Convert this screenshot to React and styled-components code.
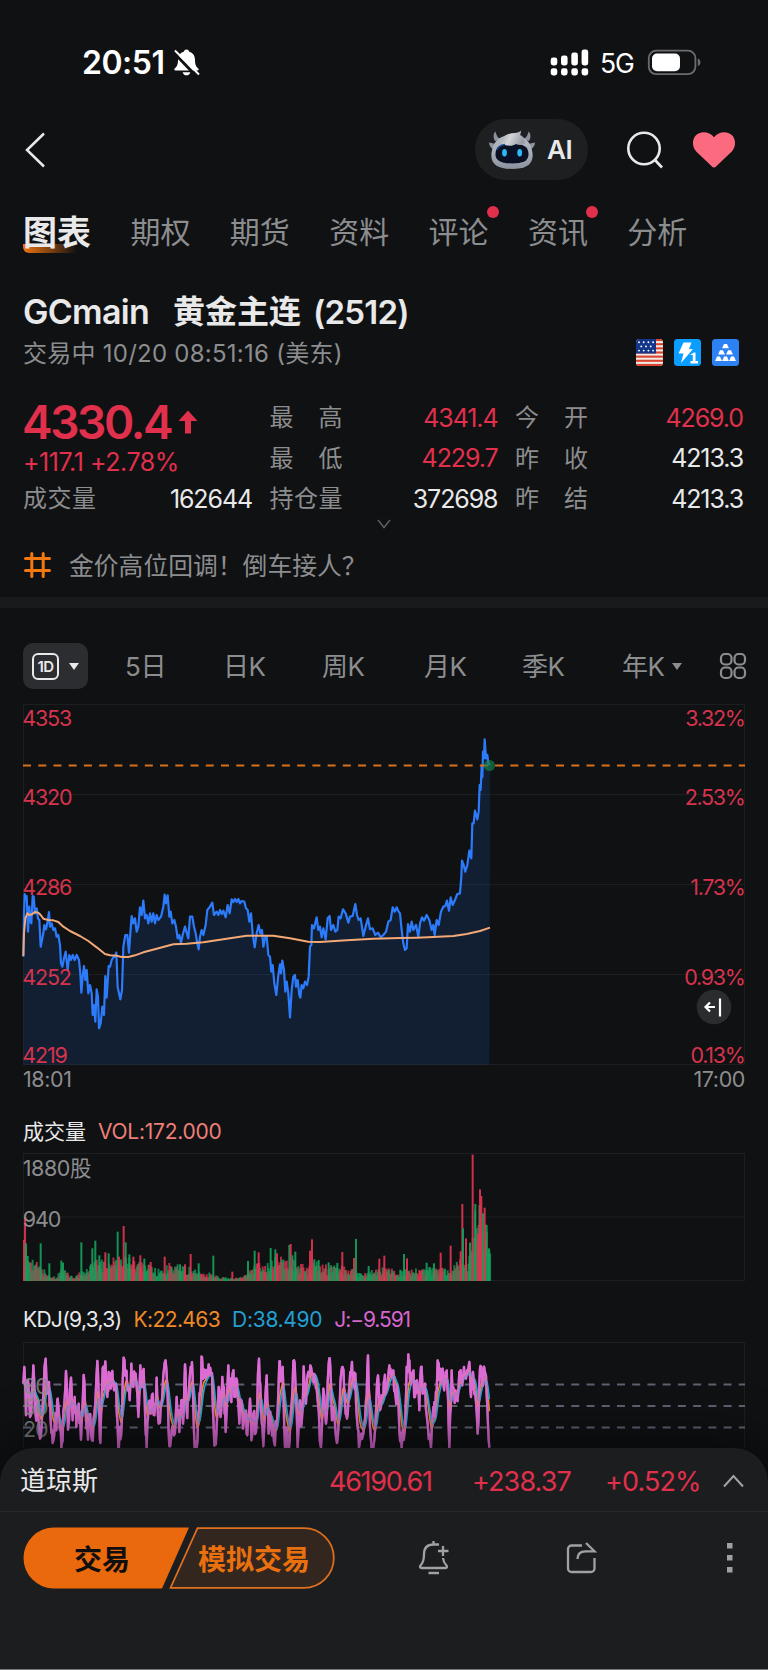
import styled, { createGlobalStyle, css } from "styled-components";

const RED = "#e0304c";
const AXIS_RED = "#d6334d";
const GREY = "#8c8d8f";
const WHITE = "#e9e9ea";

const tabs = [
  { label: "图表", active: true },
  { label: "期权" },
  { label: "期货" },
  { label: "资料" },
  { label: "评论", dot: true },
  { label: "资讯", dot: true },
  { label: "分析" },
];

const quotes = [
  { label: ["最", "高"], value: "4341.4", up: true },
  { label: ["今", "开"], value: "4269.0", up: true },
  { label: ["最", "低"], value: "4229.7", up: true },
  { label: ["昨", "收"], value: "4213.3" },
  { label: ["持", "仓", "量"], value: "372698" },
  { label: ["昨", "结"], value: "4213.3" },
];

// series are kept in the plot's own units, three per pixel
const priceLine =
  "70,770 72,640 74,582 78,600 80,588 82,640 84,695 88,620 90,660 94,670 98,588 101,590 105,640 110,625 114,655 118,660 122,740 126,720 130,700 133,675 138,688 142,670 147,636 150,680 155,670 160,690 165,685 170,710 175,705 180,735 183,790 187,800 192,775 197,755 203,810 208,765 213,780 218,765 224,780 230,765 237,780 241,820 244,878 248,830 252,798 256,840 260,810 265,880 270,855 275,880 278,945 282,915 286,965 290,868 294,890 297,985 302,970 307,920 312,945 316,828 320,893 326,798 330,800 335,780 340,772 345,770 349,758 353,860 358,885 361,898 366,870 370,740 376,705 382,705 387,758 391,700 395,648 400,670 405,655 410,695 415,680 420,622 425,645 430,602 435,655 440,645 445,670 450,640 455,665 460,640 465,670 470,645 475,660 483,650 490,620 494,584 498,610 503,586 508,650 512,635 517,670 523,660 528,680 533,715 538,705 543,728 548,705 555,680 565,715 570,650 577,650 582,680 587,700 592,730 596,748 600,710 605,690 610,705 617,675 622,630 630,620 637,608 642,645 650,635 655,645 660,630 665,642 670,632 677,652 683,615 689,640 695,598 700,606 705,597 710,606 715,597 720,610 725,603 733,605 738,625 743,630 748,665 753,640 758,700 764,742 770,700 776,675 781,700 786,690 790,740 796,710 800,708 805,765 810,770 814,815 818,795 823,850 829,885 835,825 840,793 843,820 847,782 852,810 856,875 860,845 865,880 870,952 875,870 880,830 885,825 888,860 893,840 898,885 901,893 905,855 910,865 915,845 921,855 926,830 930,740 934,735 936,675 942,685 950,652 955,690 960,680 965,712 970,685 977,718 983,655 989,648 993,690 1000,675 1006,695 1012,690 1016,650 1022,655 1029,628 1037,640 1045,668 1050,650 1058,648 1066,612 1071,645 1076,660 1082,655 1090,708 1097,680 1104,655 1110,688 1118,685 1126,705 1134,698 1142,712 1150,705 1158,695 1165,665 1172,660 1178,622 1184,635 1190,622 1196,635 1200,640 1205,690 1210,730 1215,750 1220,745 1224,672 1230,695 1235,665 1240,690 1248,675 1255,710 1260,670 1266,652 1272,662 1280,645 1288,660 1295,690 1300,675 1304,705 1310,660 1316,675 1323,635 1330,620 1336,618 1341,602 1347,632 1352,592 1358,615 1365,600 1372,582 1380,580 1384,530 1386,482 1391,495 1396,515 1402,495 1408,452 1414,475 1417,370 1421,370 1425,332 1432,358 1436,335 1439,255 1442,270 1445,200 1447,232 1449,155 1452,175 1454,118 1458,175 1462,165 1465,190 1470,195";

const averageLine =
  "70,768 72,700 76,655 82,640 88,645 96,643 104,636 115,638 122,645 130,656 145,660 160,661 175,666 190,680 210,693 240,708 265,723 290,742 315,762 330,766 350,767 365,771 385,771 405,766 430,757 470,746 520,733 560,731 610,727 660,719 740,707 820,707 870,715 925,725 960,726 1040,721 1120,716 1200,714 1250,713 1300,711 1360,708 1400,702 1440,693 1470,683";

const volumeEnvelope = parse(
  "70,110 90,55 110,50 130,30 150,15 165,10 180,35 200,30 215,10 240,25 270,45 300,60 330,65 360,70 390,65 410,50 450,40 490,25 500,50 540,40 570,35 600,25 640,20 660,10 690,8 720,10 745,25 770,50 800,45 830,65 860,60 890,50 920,40 950,50 980,40 1020,40 1060,30 1080,20 1120,35 1160,35 1200,30 1230,35 1300,35 1350,35 1380,60 1400,60 1415,150 1425,190 1440,200 1460,120 1470,60"
);

const volumeSpikes =
  "72,390r 75,322r 78,400g 83,438g 122,400g 148,460g 184,452g 189,458g 244,397g 277,415g 286,392g 298,436g 316,427r 326,430g 353,365g 357,440r 371,348r 377,397g 388,433g 400,440r 421,436r 433,446g 452,456r 494,440r 540,463g 555,463r 572,432r 596,460g 640,437g 697,485r 744,453g 764,422g 776,427r 812,414g 826,418g 831,430r 868,405g 872,402r 877,436g 886,425g 930,422r 936,388r 943,448g 956,450g 986,457g 1012,459g 1027,426r 1062,444r 1068,387g 1106,468g 1138,446r 1153,437r 1212,432g 1221,445r 1280,458g 1302,460g 1322,428r 1352,407r 1382,424r 1387,282r 1389,355g 1398,385r 1410,398g 1418,134r 1426,282g 1434,370r 1440,238r 1444,258r 1449,310g 1454,293r 1460,345g 1467,415g"
    .split(" ")
    .map((s) => {
      const [x, y] = s.slice(0, -1).split(",").map(Number);
      return { x, h: 513 - y, up: s.endsWith("r") };
    });

const jKeys = parse(
  "70,250 73,200 78,345 84,240 90,350 95,300 100,195 107,345 112,300 120,415 127,330 137,175 142,280 147,245 152,360 158,428 165,350 169,390 173,295 180,390 186,428 192,320 198,212 204,388 213,232 218,360 224,290 229,380 236,310 243,418 251,224 257,340 264,418 268,345 276,420 283,340 292,182 297,330 301,428 308,205 312,260 316,183 322,290 326,215 332,265 337,212 342,270 348,250 355,442 360,380 363,410 371,172 378,210 383,270 389,300 394,190 400,260 407,220 415,350 421,195 426,260 431,206 436,370 440,442 446,310 452,340 458,280 463,345 470,232 476,370 482,320 494,188 502,260 508,438 515,390 522,405 530,290 538,395 544,300 549,370 555,192 560,330 565,300 572,200 578,230 584,442 590,442 597,330 602,260 606,170 611,220 617,235 622,208 628,225 636,218 643,436 650,380 656,260 662,350 667,230 672,260 677,395 685,195 692,300 698,218 705,290 711,240 718,370 724,300 729,385 736,340 742,405 750,295 754,420 760,340 768,395 777,175 783,330 790,438 800,225 806,400 813,350 822,425 830,380 838,183 843,240 848,200 855,440 862,400 867,442 873,330 880,182 886,240 893,442 900,300 905,370 911,198 918,310 925,215 931,195 938,220 945,225 953,300 963,442 970,265 978,370 986,192 991,200 996,360 1003,330 1011,428 1018,340 1023,225 1028,200 1035,310 1041,355 1048,260 1056,185 1062,260 1066,220 1072,370 1077,442 1084,400 1090,400 1098,300 1104,165 1110,380 1117,442 1126,380 1134,225 1140,330 1148,290 1153,240 1158,275 1168,195 1173,230 1180,210 1187,290 1192,260 1198,390 1205,442 1215,380 1220,200 1225,162 1230,240 1238,215 1245,290 1251,240 1258,330 1263,200 1268,280 1275,250 1283,370 1293,442 1300,320 1305,350 1313,180 1318,240 1324,208 1330,250 1337,215 1342,260 1348,442 1355,210 1361,265 1370,300 1378,215 1384,240 1392,200 1398,235 1408,185 1413,290 1419,215 1425,275 1433,400 1440,205 1444,200 1450,240 1456,220 1462,320 1468,442"
);

function parse(str) {
  return str.split(" ").map((p) => p.split(",").map(Number));
}

function valueAt(points, x) {
  const i = points.findIndex((p) => p[0] >= x);
  if (i <= 0) return points[i === 0 ? 0 : points.length - 1][1];
  const [x0, y0] = points[i - 1];
  const [x1, y1] = points[i];
  return y0 + ((y1 - y0) * (x - x0)) / (x1 - x0);
}

function smooth(points, factor) {
  let prev = points[0][1];
  return points.map(([x, y]) => {
    prev += (y - prev) * factor;
    return [x, prev];
  });
}

function noise(n) {
  return Math.abs(Math.sin(n) * 43758.5) % 1;
}

const jDense = Array.from({ length: 700 }, (_, i) => [
  70 + i * 2,
  valueAt(jKeys, 70 + i * 2),
]);
const kDense = smooth(jDense, 0.2);
const dDense = smooth(kDense, 0.35);

// minute to minute swings between the key points
const jSwings = jKeys.flatMap(([x, y], i) => {
  const next = jKeys[i + 1];
  if (!next) return [[x, y]];
  const mid = (t, n) => [
    x + (next[0] - x) * t,
    Math.min(442, y + (next[1] - y) * t + (noise(n) - 0.5) * 70),
  ];
  return [[x, y], mid(0.35, i * 12.7 + 1), mid(0.65, i * 31.1 + 2)];
});

const volumeBars = Array.from({ length: 560 }, (_, i) => {
  const x = 70 + i * 2.5;
  return {
    x,
    h: valueAt(volumeEnvelope, x) * (0.4 + noise(i * 127.1) * 0.8),
    up: noise(i * 311.7) > 0.5,
  };
});

const toPoints = (list) => list.map((p) => p.join(",")).join(" ");

function StatusIcons() {
  return (
    <svg width="151" height="30" viewBox="0 0 151 30">
      <g fill="#fff">
        {[0, 1, 2, 3].map((i) => (
          <g key={i}>
            <rect
              x={0.7 + i * 10.3}
              y={[9.5, 7.5, 4.5, 1.5][i]}
              width="6.6"
              height={[8, 10, 13, 16][i]}
              rx="2.4"
            />
            <rect x={0.7 + i * 10.3} y="20.3" width="6.6" height="7.2" rx="2.4" />
          </g>
        ))}
      </g>
      <rect
        x="98.8"
        y="2.6"
        width="46.6"
        height="23.6"
        rx="7.5"
        fill="none"
        stroke="#6b6c6e"
        strokeWidth="1.8"
      />
      <path d="M147.800 10.500c1.800.5 2.600 2 2.600 3.800s-.8 3.300-2.600 3.800z" fill="#6b6c6e" />
      <rect x="102" y="5.6" width="28" height="17.6" rx="5" fill="#fff" />
    </svg>
  );
}

function MutedBell() {
  return (
    <svg width="27" height="29" viewBox="0 0 28 30">
      <path
        d="M14 1.500c1.600 0 2.600 1 2.800 2.300 3.800 1 6 4.200 6 8.200 0 5.500 1.200 7.500 3.400 9.300.9.800.5 2-.7 2H2.500c-1.200 0-1.600-1.200-.7-2C4 19.500 5.200 17.500 5.200 12c0-4 2.200-7.200 6-8.200.2-1.300 1.200-2.300 2.800-2.300z"
        fill="#fff"
      />
      <path d="M10 25h8c-.5 2-2 3.300-4 3.300S10.500 27 10 25z" fill="#fff" />
      <path d="M.5 4.500 25 30" stroke="#101113" strokeWidth="3" />
      <path d="M2 2.500 27 27.500" stroke="#fff" strokeWidth="2" />
    </svg>
  );
}

function Robot() {
  return (
    <svg width="48" height="40" viewBox="0 0 48 40">
      <defs>
        <linearGradient id="shell" x1="0" y1="0" x2="0" y2="1">
          <stop offset="0" stopColor="#b4b8c0" />
          <stop offset="0.5" stopColor="#a9aeb8" />
          <stop offset="1" stopColor="#8a93a0" />
        </linearGradient>
        <linearGradient id="hair" x1="0" y1="0" x2="1" y2="0.3">
          <stop offset="0" stopColor="#9a9ea7" />
          <stop offset="0.5" stopColor="#d2d3d7" />
          <stop offset="1" stopColor="#9a9ea8" />
        </linearGradient>
      </defs>
      <path d="M7 11C5 7 5 4 7.500 1.500c1 4 2 6 5 8zM41 11c2-4 2-7-.5-9.500-1 4-2 6-5 8z" fill="#8a909d" />
      <path d="M1 12.500 8 14l-2 6c-3-2-5-4.500-5-7.500zM47 12.500 40 14l2 6c3-2 5-4.500 5-7.500z" fill="#8d93a0" />
      <path d="M24 5c13 0 19 7 20.500 18C46 35 37 39 24 39S2 35 3.500 23C5 12 11 5 24 5z" fill="url(#shell)" />
      <path d="M24 14c11 0 16 2 16.500 9.500S35 33.500 24 33.500 7 31 7.500 23.500 13 14 24 14z" fill="#0b1124" />
      <path d="M12 13C14 6 20 3 27 3c2 0 5-1 6-2.500 0 2-.5 3.500-1 4.500 3 1 5 4 5 8.500-4 2-7 1-9 .5-4 3-11 2-16-1z" fill="url(#hair)" />
      <path d="M9 20c1-3.500 4-5 8-5.500" stroke="#1d4c8c" strokeWidth="1.500" fill="none" />
      <ellipse cx="16.500" cy="22.800" rx="2.400" ry="3.700" fill="#2bbcf5" />
      <ellipse cx="31.700" cy="22.800" rx="2.400" ry="3.700" fill="#2bbcf5" />
    </svg>
  );
}

function Flag() {
  return (
    <svg width="27" height="27" viewBox="0 0 27 27">
      <clipPath id="badge">
        <rect width="27" height="27" rx="3.500" />
      </clipPath>
      <g clipPath="url(#badge)">
        <rect width="27" height="27" fill="#f3e9e6" />
        {[0, 1, 2, 3, 4, 5, 6].map((i) => (
          <rect key={i} y={i * 4.15} width="27" height="2.100" fill="#d8452f" />
        ))}
        <rect width="20" height="14.500" fill="#13358a" />
        {[0, 1, 2].map((row) =>
          [0, 1, 2, 3].map((col) =>
            row === 1 && col === 3 ? null : (
              <circle
                key={`${row}${col}`}
                cx={(row === 1 ? 5.3 : 3) + col * 4.7}
                cy={3.2 + row * 4.2}
                r="0.950"
                fill="#fff"
              />
            )
          )
        )}
      </g>
    </svg>
  );
}

function PriceChart() {
  const left = ["4353", "4320", "4286", "4252", "4219"];
  const right = ["3.32%", "2.53%", "1.73%", "0.93%", "0.13%"];
  const base = [21.8, 101, 191, 281, 359.3];
  return (
    <Plot height="361" viewBox="0 0 722 361">
      <g stroke="#1d1e20" strokeWidth="1">
        {[0.5, 90.5, 180.5, 270.5, 360.5].map((y) => (
          <path key={y} d={`M0 ${y}H722`} />
        ))}
        <path d="M.5 0V361M721.500 0V361" />
      </g>
      <g transform="translate(-23 -4) scale(.33333)">
        <polygon
          points={`70,1094 ${priceLine} 1468,1094`}
          fill="#2878ff"
          fillOpacity="0.13"
        />
        <polyline
          points={priceLine}
          fill="none"
          stroke="#2c7bfb"
          strokeWidth="6.600"
          strokeLinejoin="round"
        />
        <polyline
          points={averageLine}
          fill="none"
          stroke="#f3a877"
          strokeWidth="6"
          strokeLinejoin="round"
        />
      </g>
      <path
        d="M0 61.500H722"
        stroke="#d6701c"
        strokeWidth="2"
        strokeDasharray="8 7.230"
      />
      <circle cx="466.500" cy="61.500" r="5.500" fill="#12864f" fillOpacity="0.65" />
      {left.map((t, i) => (
        <AxisText key={t} x="-0.700" y={base[i]} $c={AXIS_RED} $ls={-1.2}>
          {t}
        </AxisText>
      ))}
      {right.map((t, i) => (
        <AxisText key={t} x="721.600" y={base[i]} textAnchor="end" $c={AXIS_RED} $ls={-1.3}>
          {t}
        </AxisText>
      ))}
      <circle cx="691" cy="303" r="17.300" fill="#2b2c2e" />
      <path
        d="M697 294.500v18M682.500 303H692M687 298.500l-4.500 4.500 4.500 4.500"
        stroke="#fff"
        strokeWidth="2.200"
        fill="none"
      />
    </Plot>
  );
}

function VolumeChart() {
  return (
    <Plot height="128" viewBox="0 0 722 128">
      <path
        d="M0 .5H722M0 64H722M0 127.500H722M.5 0V128M721.500 0V128"
        stroke="#1d1e20"
        fill="none"
      />
      <g transform="translate(-23 -43) scale(.33333)">
        {volumeBars.map((b) => (
          <rect
            key={b.x}
            x={b.x}
            y={513 - b.h}
            width="5.800"
            height={b.h}
            fill={b.up ? "#dd3450" : "#129f5b"}
            fillOpacity="0.78"
          />
        ))}
        {volumeSpikes.map((b) => (
          <rect
            key={b.x}
            x={b.x - 3}
            y={513 - b.h}
            width="6"
            height={b.h}
            fill={b.up ? "#dd3450" : "#129f5b"}
            fillOpacity="0.92"
          />
        ))}
      </g>
      <AxisText x="-0.300" y="22.500" $c={GREY} $ls={-0.4}>
        1880股
      </AxisText>
      <AxisText x="-0.300" y="73.500" $c={GREY} $ls={-1.1}>
        940
      </AxisText>
    </Plot>
  );
}

function KdjChart() {
  return (
    <Plot height="106" viewBox="0 0 722 106">
      <path d="M0 .5H722M.5 0V106M721.500 0V106" stroke="#1d1e20" fill="none" />
      <path
        d="M0 42.500H722M0 64H722M0 85.500H722"
        stroke="#5d6271"
        strokeWidth="1.800"
        strokeDasharray="8 7.230"
      />
      <g
        transform="translate(-23 -41.700) scale(.33333)"
        fill="none"
        strokeLinejoin="round"
      >
        <polyline points={toPoints(jSwings)} stroke="#dc6bd3" strokeWidth="7" />
        <polyline points={toPoints(kDense)} stroke="#f08c2e" strokeWidth="5" />
        <polyline points={toPoints(dDense)} stroke="#2a9fd0" strokeWidth="5" />
        <polyline
          points={toPoints(jSwings)}
          stroke="#dc6bd3"
          strokeWidth="7"
          strokeOpacity="0.75"
        />
      </g>
      {["80", "50", "20"].map((t, i) => (
        <AxisText
          key={t}
          x="0"
          y={51.5 + i * 21.5}
          $c={GREY}
          $ls={-1}
          fillOpacity="0.8"
        >
          {t}
        </AxisText>
      ))}
    </Plot>
  );
}

function QuoteCell({ label, value, up }) {
  return (
    <Cell>
      <CellLabel>
        {label.map((c) => (
          <span key={c}>{c}</span>
        ))}
      </CellLabel>
      <CellValue $up={up}>{value}</CellValue>
    </Cell>
  );
}

export default function App() {
  return (
    <Screen>
      <GlobalStyle />
      <StatusBar>
        <Clock>
          <span>20:51</span>
          <MutedBell />
        </Clock>
        <Signal>
          <StatusIcons />
          <Network>5G</Network>
        </Signal>
      </StatusBar>

      <NavBar>
        <svg width="22" height="36" viewBox="0 0 22 36">
          <path d="M20 1.500 3 18 20 34.500" fill="none" stroke={WHITE} strokeWidth="2.500" />
        </svg>
        <NavActions>
          <AiButton>
            <Robot />
            <span>AI</span>
          </AiButton>
          <svg width="38" height="38" viewBox="0 0 38 38" fill="none" stroke={WHITE} strokeWidth="2.600">
            <circle cx="18" cy="17.500" r="15.700" />
            <path d="M28.500 28.500 36 36.500" />
          </svg>
          <svg width="44" height="38" viewBox="0 0 44 38">
            <path
              d="M22 36.500c-.9 0-1.500-.4-2.300-1.200L4.200 20.500C.2 16.500-.2 9 3.500 4.800 7.800 0 17 0 22 6.300 27 0 36.200 0 40.500 4.800 44.200 9 43.800 16.500 39.800 20.500L24.300 35.300c-.8.800-1.400 1.200-2.300 1.200z"
              fill="#fb6a7e"
            />
          </svg>
        </NavActions>
      </NavBar>

      <Tabs>
        {tabs.map((t) => (
          <Tab key={t.label} $active={t.active}>
            <span>{t.label}</span>
            {t.dot && <Dot />}
          </Tab>
        ))}
      </Tabs>

      <Title>
        <Symbol>GCmain</Symbol>
        <span>黄金主连</span>
        <Contract>(2512)</Contract>
      </Title>
      <SubTitle>
        <span>交易中 10/20 08:51:16 (美东)</span>
        <Badges>
          <Flag />
          <svg width="27" height="27" viewBox="0 0 27 27">
            <rect width="27" height="27" rx="3.500" fill="#0b9dff" />
            <path d="M9.500 3.500h8L15 10h4L7 24l2.500-9.500H4.500z" fill="#fff" />
            <path d="M16.500 15.500l3.500-2h1.500v8.500H24V24.500h-7.500V22h2.300v-6h-2.300z" fill="#fff" />
          </svg>
          <svg width="27" height="27" viewBox="0 0 27 27">
            <rect width="27" height="27" rx="3.500" fill="#2c82f2" />
            <g fill="#fff">
              {[
                [13.5, 5],
                [9.5, 11.3],
                [17.5, 11.3],
                [6.5, 17.6],
                [13.5, 17.6],
                [20.5, 17.6],
              ].map(([x, y]) => (
                <path key={`${x}${y}`} d={`M${x - 1.5} ${y}h3l1.900 4.300h-6.800z`} />
              ))}
            </g>
          </svg>
        </Badges>
      </SubTitle>

      <Quote>
        <Price>
          <span>4330.4</span>
          <svg width="20" height="24" viewBox="0 0 20 24">
            <path d="M10 .5 19.500 11H13v12.500H7V11H.5z" fill={RED} />
          </svg>
        </Price>
        <QuoteCell {...quotes[0]} />
        <QuoteCell {...quotes[1]} />
        <Change>
          <span>+117.1 +2.78%</span>
        </Change>
        <QuoteCell {...quotes[2]} />
        <QuoteCell {...quotes[3]} />
        <QuoteCell label={["成", "交", "量"]} value="162644" />
        <QuoteCell {...quotes[4]} />
        <QuoteCell {...quotes[5]} />
      </Quote>
      <Expand>
        <svg width="14" height="10" viewBox="0 0 14 10">
          <path d="M1 1l6 7.500L13 1" fill="none" stroke="#5d5e60" strokeWidth="1.500" />
        </svg>
      </Expand>

      <Topic>
        <svg width="27" height="26" viewBox="0 0 27 26">
          <path
            d="M7.800 1.500v23M19.200 1.500v23M1.500 6.500h24M1.500 18.500h24"
            stroke="#f5780f"
            strokeWidth="3"
            strokeLinecap="round"
          />
        </svg>
        <TopicText>金价高位回调！倒车接人？</TopicText>
      </Topic>
      <Band />

      <Periods>
        <Current>
          <Day>1D</Day>
          <Caret $c={WHITE} />
        </Current>
        <Period $w={98}>5日</Period>
        <Period $w={99}>日K</Period>
        <Period $w={102}>周K</Period>
        <Period $w={98}>月K</Period>
        <Period $w={100}>季K</Period>
        <Period $w={50}>年K</Period>
        <Caret $c={GREY} />
        <GridIcon width="28" height="28" viewBox="0 0 28 28" fill="none" stroke={GREY} strokeWidth="2.200">
          <rect x="2" y="2" width="10.500" height="10.500" rx="4" />
          <rect x="15.500" y="2" width="10.500" height="10.500" rx="4" />
          <rect x="2" y="15.500" width="10.500" height="10.500" rx="4" />
          <rect x="15.500" y="15.500" width="10.500" height="10.500" rx="4" />
        </GridIcon>
      </Periods>

      <Charts>
        <PriceChart />
        <TimeAxis>
          <span>18:01</span>
          <span>17:00</span>
        </TimeAxis>
        <Legend $h={44}>
          <Item $c={WHITE}>成交量</Item>
          <Item $c="#ee7f79" $ls={-0.25}>VOL:172.000</Item>
        </Legend>
        <VolumeChart />
        <Legend $h={61} $top={15}>
          <Item $c={WHITE} $ls={-0.7}>KDJ(9,3,3)</Item>
          <Item $c="#ef8a26" $ls={-0.6}>K:22.463</Item>
          <Item $c="#239fd2" $ls={-0.3}>D:38.490</Item>
          <Item $c="#d766cf" $ls={-1.1}>J:−9.591</Item>
        </Legend>
        <KdjChart />
      </Charts>

      <Sheet>
        <IndexRow>
          <IndexName>道琼斯</IndexName>
          <IndexValue $w={143} $ls={-1.3}>46190.61</IndexValue>
          <IndexValue $w={133} $ls={-0.9}>+238.37</IndexValue>
          <IndexValue $w={118} $ls={-0.9}>+0.52%</IndexValue>
          <svg width="21" height="14" viewBox="0 0 21 14">
            <path d="M1 12.500 10.500 2 20 12.500" fill="none" stroke="#a2a3a5" strokeWidth="2" />
          </svg>
        </IndexRow>
        <ActionRow>
          <TradeButtons>
            <TradeShape width="312" height="62" viewBox="0 0 312 62">
              <path d="M31 0.500H166L139 61.500H31a30.500 30.500 0 0 1 0-61z" fill="#ea690c" />
              <path
                d="M174.500 1.200H281a29.800 29.800 0 0 1 0 59.600H147.500z"
                fill="#33261f"
                stroke="#e0701f"
                strokeWidth="1.700"
              />
            </TradeShape>
            <TradeLabel $w={158}>交易</TradeLabel>
            <TradeLabel $w={146} $ghost>模拟交易</TradeLabel>
          </TradeButtons>
          <svg width="32" height="36" viewBox="0 0 32 36" fill="none" stroke="#a0a1a4" strokeWidth="2.300">
            <path d="M15.500 1v3M21 4.500h-5.500C9 4.500 6 8.500 6 14.500c0 6-1 8.500-3.500 11-1 1-.5 2.500 1 2.500h24c1.500 0 2-1.500 1-2.500-2-2-3.200-4-3.500-7.500" />
            <path d="M25 6v10M20 11h10.500M10.500 33H21" />
          </svg>
          <ShareIcon width="32" height="34" viewBox="0 0 32 34" fill="none" stroke="#a0a1a4" strokeWidth="2.300">
            <path d="M16 4.500H5.500a3.500 3.500 0 0 0-3.500 3.500v19.500A3.500 3.500 0 0 0 5.500 31H25a3.500 3.500 0 0 0 3.500-3.500V17" />
            <path d="M11.500 18c0-5 3-7.700 8-7.700h9L20 2" />
          </ShareIcon>
          <MoreIcon width="7" height="32" viewBox="0 0 7 32" fill="#a0a1a4">
            <rect x="1" y="1" width="5.500" height="5.500" />
            <rect x="1" y="13" width="5.500" height="5.500" />
            <rect x="1" y="25" width="5.500" height="5.500" />
          </MoreIcon>
        </ActionRow>
      </Sheet>
    </Screen>
  );
}

const GlobalStyle = createGlobalStyle`
  * {
    box-sizing: border-box;
  }

  body {
    margin: 0;
    background: #101113;
    font-family: Inter, "Noto Sans CJK SC", sans-serif;
    line-height: 1;
  }

  svg {
    display: block;
    flex: none;
  }
`;

const Screen = styled.div`
  width: 768px;
  height: 1670px;
  overflow: hidden;
  background: #101113;
  color: ${WHITE};
  white-space: nowrap;
`;

const StatusBar = styled.div`
  display: flex;
  justify-content: space-between;
  align-items: center;
  height: 119px;
  padding: 6px 67px 0 82px;
`;

const Clock = styled.div`
  display: flex;
  align-items: center;
  gap: 9px;
  color: #fff;
  font-size: 32px;
  font-weight: 600;
  letter-spacing: -0.500px;
`;

const Signal = styled.div`
  position: relative;
`;

const Network = styled.span`
  position: absolute;
  left: 50px;
  top: 2px;
  color: #fff;
  font-size: 26.500px;
  letter-spacing: -1px;
`;

const NavBar = styled.div`
  display: flex;
  justify-content: space-between;
  align-items: center;
  height: 61px;
  padding: 0 32px 0 24px;
`;

const NavActions = styled.div`
  display: flex;
  align-items: center;

  svg:last-child {
    margin-left: 28px;
  }
`;

const AiButton = styled.div`
  display: flex;
  align-items: center;
  gap: 11px;
  width: 113px;
  height: 61px;
  margin-right: 38px;
  padding: 1px 0 0 13px;
  border-radius: 31px;
  background: #1e1f21;
  font-size: 26px;
  font-weight: 600;
  letter-spacing: -0.500px;
`;

const Tabs = styled.div`
  display: flex;
  align-items: center;
  gap: 39.400px;
  height: 85px;
  padding: 19px 0 0 23px;
`;

const Tab = styled.div`
  position: relative;
  color: ${GREY};
  font-size: 30px;

  ${({ $active }) =>
    $active &&
    css`
      padding: 4px 0 3px;
      border-radius: 0 0 0 6px;
      background: linear-gradient(90deg, #f0730f, transparent) 0 100% / 54px 9px
        no-repeat;
      color: ${WHITE};
      font-size: 34px;
      font-weight: 700;
    `}
`;

const Dot = styled.i`
  position: absolute;
  top: -11px;
  right: -10.500px;
  width: 12px;
  height: 12px;
  border-radius: 50%;
  background: ${RED};
`;

const Title = styled.div`
  display: flex;
  align-items: center;
  height: 66px;
  padding: 28px 0 0 23px;
  font-size: 32px;
  font-weight: 600;
`;

const Symbol = styled.span`
  width: 150px;
  font-size: 34px;
  letter-spacing: -0.700px;
`;

const Contract = styled.span`
  margin-left: 12px;
  font-size: 33px;
  letter-spacing: -0.800px;
`;

const SubTitle = styled.div`
  display: flex;
  justify-content: space-between;
  align-items: center;
  height: 44px;
  padding: 1px 29px 0 23px;
  color: ${GREY};
  font-size: 24px;
  letter-spacing: 0.250px;
`;

const Badges = styled.div`
  display: flex;
  gap: 11px;
  margin-top: -2px;
`;

const Quote = styled.div`
  display: grid;
  grid-template-columns: 229px 228px 228px;
  grid-auto-rows: 40.500px;
  column-gap: 17.500px;
  padding: 23px 0 0 23px;
`;

const Price = styled.div`
  display: flex;
  align-items: center;
  gap: 7px;
  margin-left: -1px;
  padding-top: 8px;
  color: ${RED};
  font-size: 46px;
  font-weight: 600;
  letter-spacing: -2.400px;
`;

const Change = styled.div`
  display: flex;
  align-items: center;
  padding-top: 7px;
  color: ${RED};
  font-size: 25px;
  letter-spacing: -0.450px;
`;

const Cell = styled.div`
  display: flex;
  justify-content: space-between;
  align-items: center;
`;

const CellLabel = styled.div`
  display: flex;
  justify-content: space-between;
  width: 73px;
  color: ${GREY};
  font-size: 24px;
`;

const CellValue = styled.span`
  color: ${({ $up }) => ($up ? RED : WHITE)};
  font-size: 25px;
  letter-spacing: -1.100px;
`;

const Expand = styled.div`
  display: flex;
  justify-content: center;
  height: 10px;
  margin-top: -1px;
`;

const Topic = styled.div`
  display: flex;
  align-items: center;
  gap: 18px;
  height: 68.500px;
  padding: 4px 0 0 24px;
  color: ${GREY};
  font-size: 24.800px;
`;

const TopicText = styled.span`
  padding-top: 3px;
`;

const Band = styled.div`
  height: 11px;
  background: #191a1c;
`;

const Periods = styled.div`
  display: flex;
  align-items: center;
  height: 96px;
  padding: 20px 21px 0 23px;
`;

const Current = styled.div`
  display: flex;
  align-items: center;
  gap: 10px;
  width: 65px;
  height: 46px;
  margin-right: 37px;
  padding-left: 9px;
  border-radius: 10px;
  background: #2b2d31;
`;

const Day = styled.span`
  display: flex;
  justify-content: center;
  align-items: center;
  width: 27px;
  height: 27px;
  border: 2px solid ${WHITE};
  border-radius: 6px;
  font-size: 15px;
  font-weight: 600;
  letter-spacing: -0.500px;
`;

const Caret = styled.i`
  border: 5.500px solid transparent;
  border-top: 7px solid ${({ $c }) => $c};
  border-bottom: 0;
`;

const Period = styled.span`
  width: ${({ $w }) => $w}px;
  padding-top: 2px;
  color: ${GREY};
  font-size: 26px;
  letter-spacing: -0.400px;
`;

const GridIcon = styled.svg`
  margin-left: auto;
`;

const Charts = styled.div`
  padding: 0 23px;
`;

const Plot = styled.svg`
  width: 722px;
  overflow: visible;
`;

const AxisText = styled.text`
  fill: ${({ $c }) => $c};
  font-size: 21.500px;
  letter-spacing: ${({ $ls = 0 }) => $ls}px;
`;

const TimeAxis = styled.div`
  display: flex;
  justify-content: space-between;
  align-items: center;
  height: 28px;
  margin-bottom: 16px;
  padding-top: 2px;
  color: ${GREY};
  font-size: 21.500px;
  letter-spacing: -0.400px;
`;

const Legend = styled.div`
  display: flex;
  align-items: center;
  gap: 12px;
  height: ${({ $h }) => $h}px;
  padding-top: ${({ $top = 0 }) => $top}px;
`;

const Item = styled.span`
  color: ${({ $c }) => $c};
  font-size: 21px;
  letter-spacing: ${({ $ls = 0 }) => $ls}px;
`;

const Sheet = styled.div`
  position: relative;
  height: 222px;
  border-bottom: 1px solid #77787a;
  border-radius: 34px 34px 0 0;
  background: #1c1d1f;
  box-shadow: 0 -6px 50px rgba(0, 0, 0, 0.6);
`;

const IndexRow = styled.div`
  display: flex;
  align-items: center;
  height: 64px;
  padding: 3px 24px 0 20px;
  border-bottom: 1px solid #27282a;
`;

const IndexName = styled.span`
  margin-right: auto;
  font-size: 26px;
`;

const IndexValue = styled.span`
  width: ${({ $w }) => $w}px;
  color: ${RED};
  font-size: 27px;
  letter-spacing: ${({ $ls }) => $ls}px;
`;

const ActionRow = styled.div`
  display: flex;
  align-items: center;
  height: 92px;
  padding: 0 35px 0 23px;
`;

const TradeButtons = styled.div`
  position: relative;
  display: flex;
  align-items: center;
  width: 312px;
  height: 62px;
  margin-right: 83px;
`;

const TradeShape = styled.svg`
  position: absolute;
  inset: 0;
`;

const TradeLabel = styled.span`
  position: relative;
  width: ${({ $w }) => $w}px;
  padding-top: 3px;
  color: ${({ $ghost }) => ($ghost ? "#e9700f" : "#0f0f10")};
  font-size: 28px;
  font-weight: 700;
  text-align: center;
`;

const ShareIcon = styled.svg`
  margin-left: 116px;
`;

const MoreIcon = styled.svg`
  margin-left: auto;
`;
